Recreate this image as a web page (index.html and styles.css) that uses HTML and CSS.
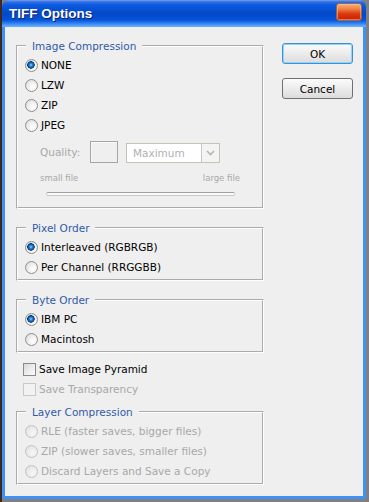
FILE: index.html
```html
<!DOCTYPE html>
<html lang="en">
<head>
  <meta charset="UTF-8" />
  <title>TIFF Options</title>
  <meta name="viewport" content="width=device-width, initial-scale=1" />
  <link rel="stylesheet" href="styles.css">
</head>
<body>
  <!-- XP-style dialog window -->
  <div class="window">
    <div class="titlebar">
      <span class="title">TIFF Options</span>
      <span class="close-btn"></span>
    </div>

    <div class="dialog">
      <!-- left column: option groups -->
      <div class="options">
        <fieldset class="group group-compression">
          <legend>Image Compression</legend>
          <label class="radio-row"><span class="radio checked"></span>NONE</label>
          <label class="radio-row"><span class="radio"></span>LZW</label>
          <label class="radio-row"><span class="radio"></span>ZIP</label>
          <label class="radio-row"><span class="radio"></span>JPEG</label>

          <div class="quality-row">
            <span class="quality-label">Quality:</span>
            <span class="quality-box"></span>
            <span class="select">
              <span class="select-value">Maximum</span>
              <span class="select-arrow">
                <svg width="9" height="6" viewBox="0 0 9 6"><polyline points="1,1 4.5,4.5 8,1" fill="none" stroke="#b4b4b4" stroke-width="1.6"/></svg>
              </span>
            </span>
          </div>
          <div class="size-labels"><span>small file</span><span>large file</span></div>
          <div class="slider-track"></div>
        </fieldset>

        <fieldset class="group">
          <legend>Pixel Order</legend>
          <label class="radio-row"><span class="radio checked"></span>Interleaved (RGBRGB)</label>
          <label class="radio-row"><span class="radio"></span>Per Channel (RRGGBB)</label>
        </fieldset>

        <fieldset class="group">
          <legend>Byte Order</legend>
          <label class="radio-row"><span class="radio checked"></span>IBM PC</label>
          <label class="radio-row"><span class="radio"></span>Macintosh</label>
        </fieldset>

        <div class="checks">
          <label class="check-row"><span class="checkbox"></span>Save Image Pyramid</label>
          <label class="check-row disabled"><span class="checkbox"></span>Save Transparency</label>
        </div>

        <fieldset class="group group-layers">
          <legend>Layer Compression</legend>
          <label class="radio-row disabled"><span class="radio"></span>RLE (faster saves, bigger files)</label>
          <label class="radio-row disabled"><span class="radio"></span>ZIP (slower saves, smaller files)</label>
          <label class="radio-row disabled"><span class="radio"></span>Discard Layers and Save a Copy</label>
        </fieldset>
      </div>

      <!-- right column: buttons -->
      <div class="buttons">
        <button class="btn btn-default">OK</button>
        <button class="btn">Cancel</button>
      </div>
    </div>
  </div>
</body>
</html>
```

FILE: styles.css
```css
/* -----------------------------------------------
   1. Reset + page
   ----------------------------------------------- */
* {
  margin: 0;
  padding: 0;
  box-sizing: border-box;
}

body {
  width: 369px;
  height: 502px;
  overflow: hidden;
  background: linear-gradient(90deg, #3a2a22 0, #3a2a22 2px, #808083 2px);
  font-family: "DejaVu Sans", sans-serif;
  font-size: 10.5px;
  color: #000;
}

/* -----------------------------------------------
   2. Window frame + title bar
   ----------------------------------------------- */
.window {
  width: 364px;
  margin-left: 2px;
  background: #3f91f3;
  border-radius: 7px 7px 0 0;
  padding: 0 3px 3px 3px;
}

.titlebar {
  height: 27px;
  margin: 0 -3px;
  padding: 0 4px 0 7px;
  display: flex;
  align-items: center;
  justify-content: space-between;
  border-radius: 7px 7px 0 0;
  background: linear-gradient(
    180deg,
    #7d9be0 0,
    #2d6fe8 2px,
    #0a5ae0 5px,
    #0348c8 14px,
    #0653d8 20px,
    #2a7cf0 23px,
    #5ea8fa 26px,
    #6ab0fb 27px
  );
}

.title {
  font-family: "Liberation Sans", sans-serif;
  font-weight: bold;
  font-size: 13.5px;
  color: #ffffff;
  text-shadow: 1px 1px 0 #0c1f6e;
  margin-top: -1px;
}

.close-btn {
  align-self: flex-start;
  margin-top: 3px;
  width: 26px;
  height: 18px;
  border: 1px solid #8c6a58;
  border-radius: 3px;
  box-shadow: inset 0 0 0 1px rgba(255, 200, 160, 0.5);
  background: linear-gradient(180deg, #f4b27a 0, #ee8448 30%, #dc3a10 60%, #cc2000 100%);
}

/* -----------------------------------------------
   3. Dialog body
   ----------------------------------------------- */
.dialog {
  height: 469px;
  background: #efefef;
  display: flex;
  padding-left: 11px;
}

.options {
  width: 248px;
  padding-top: 12px;
}

/* -----------------------------------------------
   4. Group boxes
   ----------------------------------------------- */
.group {
  border: 2px groove #ffffff;
  padding: 0 0 2px 0;
  min-width: 0;
}
.group + .group {
  margin-top: 12px;
}
.group legend {
  margin-left: 8px;
  padding: 0 6px;
  line-height: 14px;
  color: #2f5aa8;
}
.group-compression {
  padding-bottom: 11px;
}
.group-layers {
  margin-top: 6px;
}

/* -----------------------------------------------
   5. Radios + checkboxes
   ----------------------------------------------- */
.radio-row,
.check-row {
  display: flex;
  align-items: center;
  height: 20px;
  padding-left: 7px;
  white-space: nowrap;
}
.radio-row:first-of-type {
  margin-top: 2px;
}

.radio {
  width: 13px;
  height: 13px;
  margin-right: 3px;
  border: 1px solid #8e8f8f;
  border-radius: 50%;
  background: radial-gradient(circle at 65% 65%, #ffffff 0, #f2f2f2 40%, #d4d4d4 100%);
}
.radio.checked {
  background:
    radial-gradient(circle at 45% 45%, #9ad8ff 0, #2b86d6 1.5px, #135ca8 2.6px, #0b3d78 3.5px, rgba(11, 61, 120, 0) 4px),
    radial-gradient(circle at 65% 65%, #ffffff 0, #f2f2f2 40%, #d4d4d4 100%);
}

.checks {
  margin-top: 6px;
}
.checkbox {
  width: 13px;
  height: 13px;
  margin-right: 3px;
  border: 1px solid #8a8a8a;
  background: linear-gradient(135deg, #d8d8d8 0, #ececec 50%, #fbfbfb 100%);
}

.disabled {
  color: #a8a8a8;
}
.disabled .radio {
  border-color: #c2c2c2;
  background: radial-gradient(circle at 65% 65%, #f6f6f6 0, #ebebeb 50%, #dedede 100%);
}
.disabled .checkbox {
  border-color: #c8c8c8;
  background: #f2f2f2;
}

/* -----------------------------------------------
   6. JPEG quality (disabled)
   ----------------------------------------------- */
.quality-row {
  display: flex;
  align-items: center;
  height: 22px;
  margin-top: 6px;
  padding-left: 22px;
  color: #a8a8a8;
}
.quality-label {
  width: 50px;
}
.quality-box {
  width: 28px;
  height: 22px;
  margin-right: 8px;
  border: 1px solid #a4a4a4;
  box-shadow: inset 1px 1px 0 #f8f8f8;
}
.select {
  display: flex;
  width: 94px;
  height: 20px;
  margin-top: 2px;
  border: 1px solid #c3c3b6;
  background: #ffffff;
}
.select-value {
  flex: 1;
  padding-left: 6px;
  line-height: 18px;
  color: #b0b0b0;
}
.select-arrow {
  width: 18px;
  display: flex;
  align-items: center;
  justify-content: center;
  border-left: 1px solid #c8c8c8;
  background: #f4f4f4;
}

.size-labels {
  display: flex;
  justify-content: space-between;
  height: 12px;
  margin-top: 9px;
  padding: 0 22px;
  font-size: 8.5px;
  line-height: 12px;
  color: #a8a8a8;
}

.slider-track {
  height: 4px;
  margin: 8px 27px 0 28px;
  border: 1px solid #cacaca;
  border-top-color: #a0a0a0;
  border-radius: 2px;
  background: #fafafa;
}

/* -----------------------------------------------
   7. Buttons
   ----------------------------------------------- */
.buttons {
  margin-left: 18px;
  padding-top: 16px;
  display: flex;
  flex-direction: column;
  gap: 14px;
}
.btn {
  width: 71px;
  height: 21px;
  font-family: "DejaVu Sans", sans-serif;
  font-size: 10.5px;
  color: #000;
  border: 1px solid #707070;
  border-radius: 3px;
  background: linear-gradient(180deg, #fbfbfb 0, #ececec 50%, #dcdcdc 100%);
}
.btn-default {
  border-color: #3d8fd6;
  box-shadow: inset 0 0 0 1px #8fd4fb;
}
```
